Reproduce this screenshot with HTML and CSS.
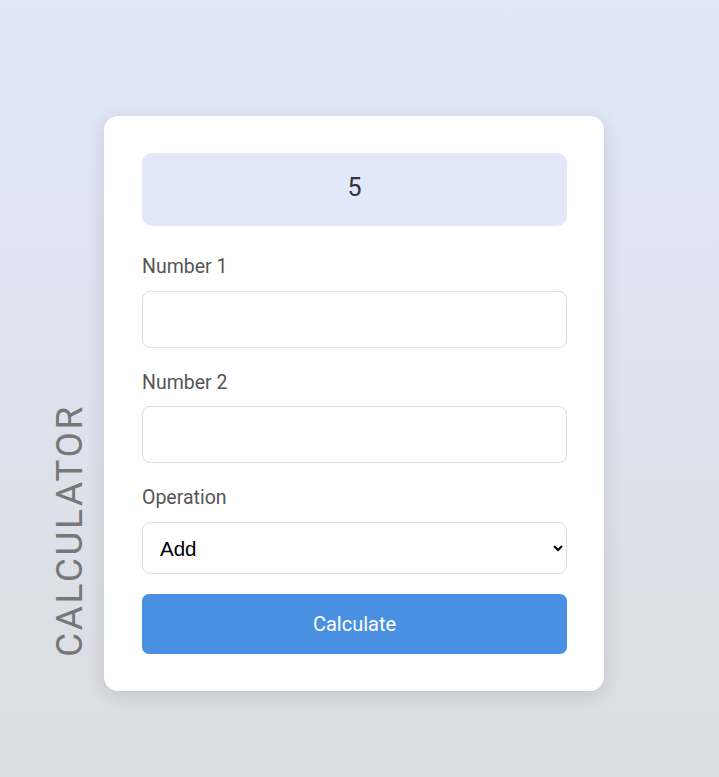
FILE: index.html
```html
<!DOCTYPE html>
<html lang="en">
<head>
<meta charset="utf-8">
<title>Calculator</title>
<link rel="stylesheet" href="styles.css">
</head>
<body>
<div class="page">
  <h1 class="side-title">CALCULATOR</h1>
  <div class="card">
    <div class="display">5</div>
    <div class="field">
      <label class="label" for="n1">Number 1</label>
      <input class="input" id="n1" type="number">
    </div>
    <div class="field">
      <label class="label" for="n2">Number 2</label>
      <input class="input" id="n2" type="number">
    </div>
    <div class="field field-last">
      <label class="label" for="op">Operation</label>
      <select class="select" id="op">
        <option>Add</option>
        <option>Subtract</option>
        <option>Multiply</option>
        <option>Divide</option>
      </select>
    </div>
    <button class="button" type="button">Calculate</button>
  </div>
</div>
</body>
</html>
```
FILE: styles.css
```css
* { box-sizing: border-box; }
html, body { margin: 0; padding: 0; }
body {
  min-height: 777px;
  background: linear-gradient(to bottom, #dfe7f9 0%, #dcdde1 100%);
  font-family: Roboto, "Liberation Sans", sans-serif;
}
.page {
  display: flex;
  align-items: flex-end;
  padding: 116px 0 0 49px;
}
.side-title {
  margin: 0 13px 34px 0;
  writing-mode: vertical-rl;
  transform: rotate(180deg);
  font-family: Roboto, sans-serif;
  font-weight: 400;
  font-size: 37px;
  line-height: 42px;
  letter-spacing: 2.6px;
  color: #777;
}
.card {
  width: 500px;
  background: #fff;
  border-radius: 14px;
  padding: 37px 37px 37px 38px;
  box-shadow: 0 4px 18px rgba(0, 0, 0, 0.12);
}
.display {
  background: #e0e8fa;
  border-radius: 10px;
  height: 73px;
  padding-bottom: 4px;
  display: flex;
  align-items: center;
  justify-content: center;
  font-family: Roboto, sans-serif;
  font-size: 25px;
  color: #333;
  margin-bottom: 30px;
}
.field { margin-bottom: 24px; }
.field-last { margin-bottom: 20px; }
.label {
  display: block;
  font-size: 19.5px;
  line-height: 22.5px;
  color: #555;
  margin-bottom: 12px;
}
.input {
  display: block;
  width: 100%;
  height: 57px;
  border: 1px solid #ddd;
  border-radius: 8px;
  background: #fff;
  padding: 0 16px;
  font-size: 20px;
}
.select {
  display: block;
  width: 100%;
  height: 52px;
  border: 1px solid #ddd;
  border-radius: 8px;
  background: #fff;
  padding: 2px 12px 0 13px;
  font-family: "Liberation Sans", Arial, sans-serif;
  font-size: 20.5px;
  color: #000;
}
.button {
  display: block;
  width: 100%;
  height: 60px;
  border: none;
  border-radius: 7px;
  background: #4a90e2;
  color: #fff;
  font-family: Roboto, sans-serif;
  font-size: 20px;
}
```
